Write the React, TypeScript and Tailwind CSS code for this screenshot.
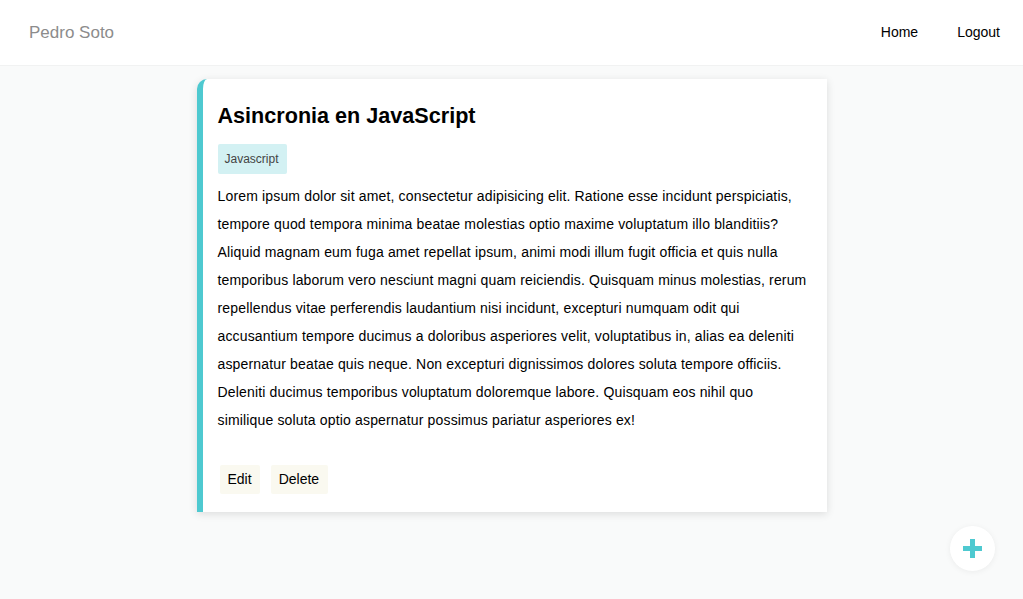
const body =
  'Lorem ipsum dolor sit amet, consectetur adipisicing elit. Ratione esse incidunt perspiciatis, tempore quod tempora minima beatae molestias optio maxime voluptatum illo blanditiis? Aliquid magnam eum fuga amet repellat ipsum, animi modi illum fugit officia et quis nulla temporibus laborum vero nesciunt magni quam reiciendis. Quisquam minus molestias, rerum repellendus vitae perferendis laudantium nisi incidunt, excepturi numquam odit qui accusantium tempore ducimus a doloribus asperiores velit, voluptatibus in, alias ea deleniti aspernatur beatae quis neque. Non excepturi dignissimos dolores soluta tempore officiis. Deleniti ducimus temporibus voluptatum doloremque labore. Quisquam eos nihil quo similique soluta optio aspernatur possimus pariatur asperiores ex!';

export default function App() {
  return (
    <div className="min-h-screen bg-[#f9fafa] font-['Liberation_Sans',Arial,sans-serif]">
      {/* Navbar */}
      <nav className="h-[66px] bg-white border-b border-[#f1f2f2] flex items-center justify-between pl-[29px] pr-[23px]">
        <a className="text-[17px] text-[#8c8c8c]">Pedro Soto</a>
        <div className="flex items-center gap-[38px] text-[14px] text-black">
          <a className="pr-[1px]">Home</a>
          <a>Logout</a>
        </div>
      </nav>

      {/* Post */}
      <main className="pt-[13px]">
        <article className="w-[630px] mx-auto bg-white border-l-[6px] border-[#4ec9d0] rounded-tl-[10px] shadow-[0_2px_8px_rgba(0,0,0,0.12)] pl-[15px] pr-[17px] pt-[23px] pb-[18px]">
          <h2 className="text-[21.6px] font-bold leading-[27px] text-black">
            Asincronia en JavaScript
          </h2>
          <span className="inline-block mt-[15px] bg-[#d3f1f3] text-[#444] text-[12px] leading-[16px] pl-[7px] pr-[8px] py-[7px] rounded-[2px]">
            Javascript
          </span>
          <p className="mt-[8px] text-[14px] leading-[28px] tracking-[0.16px] text-black">{body}</p>
          <div className="mt-[31px] flex gap-[11px] pl-[2px]">
            <button className="bg-[#faf9f0] text-[14px] leading-[17px] text-black px-[8px] py-[6px] rounded-[2px]">
              Edit
            </button>
            <button className="bg-[#faf9f0] text-[14px] leading-[17px] text-black pl-[8px] pr-[9px] py-[6px] rounded-[2px]">
              Delete
            </button>
          </div>
        </article>
      </main>

      {/* Floating add button */}
      <button className="fixed right-[28px] bottom-[28px] w-[45px] h-[45px] rounded-full bg-white shadow-[0_1px_6px_rgba(0,0,0,0.06)] flex items-center justify-center">
        <svg width="19" height="19" viewBox="0 0 19 19">
          <rect x="7" y="0" width="5" height="19" fill="#4ec9d0" />
          <rect x="0" y="7" width="19" height="5" fill="#4ec9d0" />
        </svg>
      </button>
    </div>
  );
}
